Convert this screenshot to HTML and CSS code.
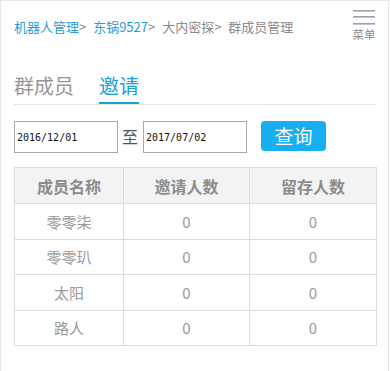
FILE: index.html
```html
<!DOCTYPE html>
<html lang="zh-CN">
<head>
<meta charset="utf-8">
<title>群成员管理</title>
<link rel="stylesheet" href="styles.css">
</head>
<body>
<div class="page">
  <header class="header">
    <nav class="crumbs">
      <a class="crumb-link">机器人管理</a><span class="sep">&gt;</span>
      <a class="crumb-link">东锅9527</a><span class="sep">&gt;</span>
      <span class="crumb">大内密探</span><span class="sep">&gt;</span>
      <span class="crumb">群成员管理</span>
    </nav>
    <div class="menu">
      <svg class="menu-icon" width="22" height="16" viewBox="0 0 22 16">
        <rect x="0" y="1" width="22" height="1.6" fill="#9aa3ad"/>
        <rect x="0" y="7" width="22" height="1.6" fill="#9aa3ad"/>
        <rect x="0" y="14" width="22" height="1.6" fill="#9aa3ad"/>
      </svg>
      <span class="menu-text">菜单</span>
    </div>
  </header>

  <div class="tabs">
    <span class="tab">群成员</span>
    <span class="tab active">邀请</span>
  </div>

  <div class="filter">
    <input class="date" type="text" value="2016/12/01">
    <span class="to">至</span>
    <input class="date" type="text" value="2017/07/02">
    <button class="query">查询</button>
  </div>

  <table class="grid">
    <thead>
      <tr><th class="c1">成员名称</th><th class="c2">邀请人数</th><th class="c3">留存人数</th></tr>
    </thead>
    <tbody>
      <tr><td>零零柒</td><td>0</td><td>0</td></tr>
      <tr><td>零零玐</td><td>0</td><td>0</td></tr>
      <tr><td>太阳</td><td>0</td><td>0</td></tr>
      <tr><td>路人</td><td>0</td><td>0</td></tr>
    </tbody>
  </table>
</div>
</body>
</html>
```

FILE: styles.css
```css
* { box-sizing: border-box; }
html, body {
  margin: 0;
  padding: 0;
  background: #fff;
}
body {
  font-family: "Noto Sans CJK SC", "Noto Sans", sans-serif;
}
.page {
  width: 389px;
  min-height: 371px;
  border: 1px solid #e8e8e8;
  border-bottom: none;
  padding: 0 12px 0 13px;
}
.header {
  height: 52px;
  display: flex;
  align-items: center;
  justify-content: space-between;
}
.crumbs {
  font-size: 13px;
  line-height: 18px;
  color: #8a8a8a;
  white-space: nowrap;
  margin-top: 0;
}
.crumb-link { color: #2a9bd4; }
.sep { color: #8a8a8a; margin-right: 4px; }
.crumb { color: #8a8a8a; }
.menu {
  display: flex;
  flex-direction: column;
  align-items: center;
  width: 24px;
  margin-top: -4px;
}
.menu-icon { display: block; }
.menu-text {
  font-size: 11.5px;
  line-height: 14px;
  color: #8a8a8a;
  margin-top: 2px;
}
.tabs {
  margin-top: 19px;
  display: flex;
  gap: 25px;
  border-bottom: 1px solid #e3e3e3;
}
.tab {
  font-size: 20px;
  line-height: 28px;
  padding: 0 0 2px 0;
  color: #9a9595;
  border-bottom: 2px solid transparent;
}
.tab.active {
  color: #1d9fd8;
  border-bottom-color: #1d9fd8;
}
.filter {
  margin-top: 16px;
  display: flex;
  align-items: flex-start;
}
.date {
  width: 104px;
  height: 32px;
  border: 1px solid #a9a9a9;
  padding: 0 0 0 2px;
  font-family: "DejaVu Sans Mono", "Liberation Mono", monospace;
  font-size: 10px;
  color: #111;
  background: #fff;
  outline: none;
}
.to {
  font-size: 16px;
  line-height: 30px;
  color: #555;
  margin: 0 5px 0 4px;
}
.query {
  margin-left: 14px;
  width: 65px;
  height: 30px;
  border: none;
  border-radius: 4px;
  background: #18aff0;
  color: #fff;
  font-family: "Noto Sans CJK SC", sans-serif;
  font-size: 19px;
  line-height: 30px;
  padding: 0;
}
.grid {
  margin-top: 14px;
  width: 362px;
  border-collapse: collapse;
  table-layout: fixed;
}
.grid th, .grid td {
  border: 1px solid #dcdcdc;
  text-align: center;
  padding: 0;
}
.grid th {
  height: 36px;
  background: #f3f3f3;
  font-size: 16px;
  font-weight: bold;
  color: #8c8c8c;
}
.grid td {
  height: 35.5px;
  font-size: 15px;
  color: #9a9a9a;
}
.c1 { width: 109px; }
.c2 { width: 126px; }
.c3 { width: 127px; }
```
